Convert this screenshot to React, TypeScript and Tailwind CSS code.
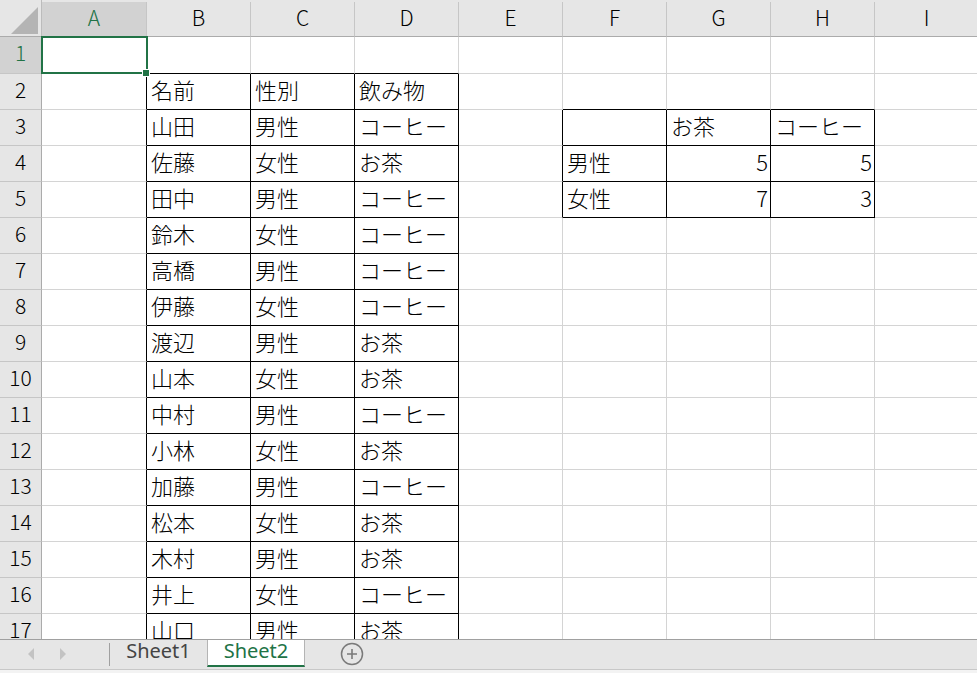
import React from "react";

const COLS = ["A", "B", "C", "D", "E", "F", "G", "H", "I"];
const COL_W = ["w-[105px]", "w-[104px]", "w-[104px]", "w-[104px]", "w-[104px]", "w-[104px]", "w-[104px]", "w-[104px]", "w-[104px]"];

const people: [string, string, string][] = [
  ["山田", "男性", "コーヒー"],
  ["佐藤", "女性", "お茶"],
  ["田中", "男性", "コーヒー"],
  ["鈴木", "女性", "コーヒー"],
  ["高橋", "男性", "コーヒー"],
  ["伊藤", "女性", "コーヒー"],
  ["渡辺", "男性", "お茶"],
  ["山本", "女性", "お茶"],
  ["中村", "男性", "コーヒー"],
  ["小林", "女性", "お茶"],
  ["加藤", "男性", "コーヒー"],
  ["松本", "女性", "お茶"],
  ["木村", "男性", "お茶"],
  ["井上", "女性", "コーヒー"],
  ["山口", "男性", "お茶"],
];

type CellVal = { t: string; num?: boolean };
const cells: Record<string, CellVal> = {};
cells["2,1"] = { t: "名前" };
cells["2,2"] = { t: "性別" };
cells["2,3"] = { t: "飲み物" };
people.forEach((p, i) => {
  cells[`${i + 3},1`] = { t: p[0] };
  cells[`${i + 3},2`] = { t: p[1] };
  cells[`${i + 3},3`] = { t: p[2] };
});
cells["3,6"] = { t: "お茶" };
cells["3,7"] = { t: "コーヒー" };
cells["4,5"] = { t: "男性" };
cells["4,6"] = { t: "5", num: true };
cells["4,7"] = { t: "5", num: true };
cells["5,5"] = { t: "女性" };
cells["5,6"] = { t: "7", num: true };
cells["5,7"] = { t: "3", num: true };

const inTable = (r: number, c: number) =>
  (r >= 2 && r <= 18 && c >= 1 && c <= 3) || (r >= 3 && r <= 5 && c >= 5 && c <= 7);

const ROWS = Array.from({ length: 17 }, (_, i) => i + 1);

function Cell({ r, c }: { r: number; c: number }) {
  const v = cells[`${r},${c}`];
  const rb = inTable(r, c) || inTable(r, c + 1);
  const bb = inTable(r, c) || inTable(r + 1, c);
  return (
    <div
      className={`${COL_W[c]} shrink-0 h-full border-r border-b flex items-center overflow-hidden whitespace-nowrap pb-[5px] ${
        rb ? "border-r-black" : "border-r-[#d4d4d4]"
      } ${bb ? "border-b-black" : "border-b-[#d4d4d4]"} ${v?.num ? "justify-end pr-[2px]" : "justify-start pl-[4px]"}`}
    >
      {v ? <span className="text-[22px] leading-none text-black font-light">{v.t}</span> : null}
    </div>
  );
}

export default function App() {
  return (
    <div className="w-[977px] h-[673px] overflow-hidden bg-white flex flex-col font-['Noto_Sans_CJK_JP',sans-serif]">
      <div className="relative h-[639px] overflow-hidden shrink-0">
        {/* column header */}
        <div className="flex h-[37px] bg-[#e6e6e6] pt-[2px]">
          <div className="w-[42px] shrink-0 border-r border-b border-r-[#bcbcbc] border-b-[#ababab] relative -mt-[2px] h-[37px]">
            <svg width="42" height="37" className="absolute left-0 top-0">
              <polygon points="11,34 38,34 38,7" fill="#b4b4b4" />
            </svg>
          </div>
          {COLS.map((col, c) => (
            <div
              key={col}
              className={`${COL_W[c]} shrink-0 h-full border-r border-b border-r-[#c6c6c6] border-b-[#ababab] flex items-center justify-center pb-[4px] text-[21px] leading-none font-light ${
                c === 0 ? "bg-[#d2d2d2] text-[#217346]" : "text-black"
              }`}
            >
              {col}
            </div>
          ))}
        </div>
        {ROWS.map((r) => (
          <div key={r} className={`flex ${r === 1 ? "h-[37px]" : "h-[36px]"}`}>
            <div
              className={`w-[42px] shrink-0 h-full border-r border-b border-r-[#ababab] border-b-[#c6c6c6] flex items-center justify-center pb-[5px] text-[21px] leading-none font-light ${
                r === 1 ? "bg-[#d2d2d2] text-[#217346]" : "bg-[#e6e6e6] text-black"
              }`}
            >
              {r}
            </div>
            {COLS.map((col, c) => (
              <Cell key={col} r={r} c={c} />
            ))}
          </div>
        ))}
        {/* selection */}
        <div className="absolute left-[41px] top-[36px] w-[107px] h-[38px] border-2 border-[#217346]" />
        <div className="absolute left-[142px] top-[69px] w-[8px] h-[8px] border border-white bg-[#217346]" />
      </div>
      {/* sheet tabs */}
      <div className="flex-1 flex flex-col bg-[#e6e6e6] border-t border-[#a0a0a0] font-['Noto_Sans',sans-serif]">
        <div className="h-[27px] flex items-stretch shrink-0">
          <div className="w-[109px] shrink-0 flex items-center">
            <svg width="8" height="12" className="ml-[27px]" viewBox="0 0 8 12">
              <polygon points="7,0 1,6 7,12" fill="#c3c3c3" />
            </svg>
            <svg width="8" height="12" className="ml-[24px]" viewBox="0 0 8 12">
              <polygon points="1,0 7,6 1,12" fill="#c3c3c3" />
            </svg>
          </div>
          <div className="w-px bg-[#a0a0a0] my-[3px] shrink-0 h-[23px]" />
          <div className="w-[97px] shrink-0 flex items-center justify-center text-[20px] text-[#444444] leading-none pb-[5px]">
            Sheet1
          </div>
          <div className="w-[98px] shrink-0 flex items-center justify-center bg-white border-l border-r border-[#b4b4b4] border-b-2 border-b-[#217346] text-[20px] text-[#217346] leading-none pb-[3px]">
            Sheet2
          </div>
          <div className="ml-[35px] flex items-center">
            <svg width="24" height="24" viewBox="0 0 24 24">
              <circle cx="12" cy="12" r="10.5" fill="none" stroke="#7a7a7a" strokeWidth="1.5" />
              <path d="M12 7v10M7 12h10" stroke="#7a7a7a" strokeWidth="1.6" />
            </svg>
          </div>
        </div>
        <div className="flex-1" />
        <div className="h-[4px] border-t border-[#c8c8c8] bg-[#f3f3f3]" />
      </div>
    </div>
  );
}
